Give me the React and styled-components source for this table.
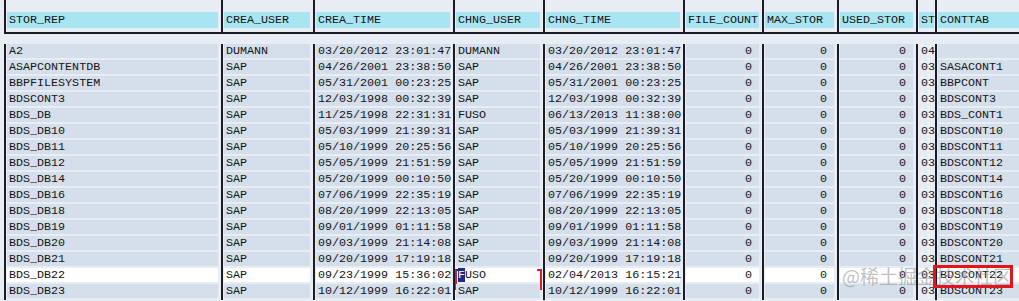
import React from 'react';
import styled, { createGlobalStyle, css } from 'styled-components';

const GlobalStyle = createGlobalStyle`
  html, body {
    margin: 0;
    padding: 0;
    background: #e8edf4;
    overflow: hidden;
  }
`;

const COLUMNS = [
  { key: 'rep', title: 'STOR_REP', width: 217 },
  { key: 'creaUser', title: 'CREA_USER', width: 92 },
  { key: 'creaTime', title: 'CREA_TIME', width: 140 },
  { key: 'chngUser', title: 'CHNG_USER', width: 90 },
  { key: 'chngTime', title: 'CHNG_TIME', width: 140 },
  { key: 'files', title: 'FILE_COUNT', width: 79, numeric: true },
  { key: 'max', title: 'MAX_STOR', width: 75, numeric: true },
  { key: 'used', title: 'USED_STOR', width: 79, numeric: true },
  { key: 'st', title: 'ST', width: 19, plain: true },
  { key: 'conttab', title: 'CONTTAB', width: 100 },
];

const row = (rep, creaUser, creaTime, chngUser, chngTime, st, conttab, extra = {}) => ({
  rep, creaUser, creaTime, chngUser, chngTime,
  files: '0', max: '0', used: '0', st, conttab, ...extra,
});

const ROWS = [
  row('A2', 'DUMANN', '03/20/2012 23:01:47', 'DUMANN', '03/20/2012 23:01:47', '04', ''),
  row('ASAPCONTENTDB', 'SAP', '04/26/2001 23:38:50', 'SAP', '04/26/2001 23:38:50', '03', 'SASACONT1'),
  row('BBPFILESYSTEM', 'SAP', '05/31/2001 00:23:25', 'SAP', '05/31/2001 00:23:25', '03', 'BBPCONT'),
  row('BDSCONT3', 'SAP', '12/03/1998 00:32:39', 'SAP', '12/03/1998 00:32:39', '03', 'BDSCONT3'),
  row('BDS_DB', 'SAP', '11/25/1998 22:31:31', 'FUSO', '06/13/2013 11:38:00', '03', 'BDS_CONT1'),
  row('BDS_DB10', 'SAP', '05/03/1999 21:39:31', 'SAP', '05/03/1999 21:39:31', '03', 'BDSCONT10'),
  row('BDS_DB11', 'SAP', '05/10/1999 20:25:56', 'SAP', '05/10/1999 20:25:56', '03', 'BDSCONT11'),
  row('BDS_DB12', 'SAP', '05/05/1999 21:51:59', 'SAP', '05/05/1999 21:51:59', '03', 'BDSCONT12'),
  row('BDS_DB14', 'SAP', '05/20/1999 00:10:50', 'SAP', '05/20/1999 00:10:50', '03', 'BDSCONT14'),
  row('BDS_DB16', 'SAP', '07/06/1999 22:35:19', 'SAP', '07/06/1999 22:35:19', '03', 'BDSCONT16'),
  row('BDS_DB18', 'SAP', '08/20/1999 22:13:05', 'SAP', '08/20/1999 22:13:05', '03', 'BDSCONT18'),
  row('BDS_DB19', 'SAP', '09/01/1999 01:11:58', 'SAP', '09/01/1999 01:11:58', '03', 'BDSCONT19'),
  row('BDS_DB20', 'SAP', '09/03/1999 21:14:08', 'SAP', '09/03/1999 21:14:08', '03', 'BDSCONT20'),
  row('BDS_DB21', 'SAP', '09/20/1999 17:19:18', 'SAP', '09/20/1999 17:19:18', '03', 'BDSCONT21'),
  row('BDS_DB22', 'SAP', '09/23/1999 15:36:02', 'FUSO', '02/04/2013 16:15:21', '03', 'BDSCONT22', { selected: true }),
  row('BDS_DB23', 'SAP', '10/12/1999 16:22:01', 'SAP', '10/12/1999 16:22:01', '03', 'BDSCONT23'),
];

const template = COLUMNS.map(c => `${c.width}px`).join(' ');

const Screen = styled.div`
  position: relative;
  width: 1019px;
  height: 301px;
  padding-left: 4px;
  box-sizing: border-box;
  font-family: "Liberation Mono", "DejaVu Sans Mono", monospace;
  font-size: 11.7px;
  color: #141414;
  overflow: hidden;
`;

const Row = styled.div`
  display: grid;
  grid-template-columns: ${template};
`;

const HeaderRow = styled(Row)`
  border-bottom: 2px solid #1c1c28;
  margin-bottom: 10px;
`;

const Cell = styled.div`
  position: relative;
  border-left: 2px solid #1c1c28;
  padding: ${p => (p.$tight ? '0 1px 0 1px' : '0 3px 0 1px')};
  min-width: 0;
`;

const HeaderCell = styled(Cell)`
  padding-top: 12px;
  padding-bottom: 4px;
`;

const HeaderBand = styled.div`
  height: 16px;
  line-height: 16px;
  padding-left: 2px;
  background: #a8e4f2;
  white-space: nowrap;
`;

const Band = styled.div`
  height: 14px;
  line-height: 14px;
  margin-bottom: 2px;
  padding: 0 1px 0 2px;
  white-space: nowrap;
  background: ${p => (p.$selected ? '#ffffff' : p.$plain ? 'transparent' : '#d5dfeb')};
  ${p => p.$numeric && css`
    text-align: right;
    padding-right: 7px;
  `}
`;

const EditCell = styled(Cell)`
  &::before, &::after {
    content: '';
    position: absolute;
    top: 1px;
    width: 3px;
    height: 17px;
    border: 2px solid #d4202c;
  }
  &::before {
    left: 0;
    border-right: none;
    border-top-color: #1c2c84;
  }
  &::after {
    right: 1px;
    border-left: none;
  }
`;

const Cursor = styled.span`
  background: #1c2c84;
  color: #ffffff;
`;

const Highlight = styled.div`
  position: absolute;
  left: 933px;
  top: 265px;
  width: 74px;
  height: 17px;
  border: 3px solid #e3141c;
`;

const Watermark = styled.div`
  position: absolute;
  left: 842px;
  top: 264px;
  font-family: "Noto Sans CJK SC", "Noto Sans", sans-serif;
  font-size: 19px;
  line-height: 24px;
  white-space: nowrap;
  color: rgba(140, 140, 140, 0.55);
  pointer-events: none;
`;

function DataRow({ data }) {
  return (
    <Row>
      {COLUMNS.map((c, i) => {
        const value = data[c.key];
        if (data.selected && c.key === 'chngUser') {
          return (
            <EditCell key={c.key}>
              <Band $selected>
                <Cursor>{value[0]}</Cursor>{value.slice(1)}
              </Band>
            </EditCell>
          );
        }
        return (
          <Cell key={c.key} $tight={c.plain}>
            <Band $selected={data.selected} $numeric={c.numeric} $plain={c.plain}>
              {value}
            </Band>
          </Cell>
        );
      })}
    </Row>
  );
}

export default function App() {
  return (
    <>
      <GlobalStyle />
      <Screen>
        <HeaderRow>
          {COLUMNS.map(c => (
            <HeaderCell key={c.key} $tight={c.plain}>
              <HeaderBand>{c.title}</HeaderBand>
            </HeaderCell>
          ))}
        </HeaderRow>
        {ROWS.map(r => <DataRow key={r.rep} data={r} />)}
        <Watermark>@稀土掘金技术社区</Watermark>
        <Highlight />
      </Screen>
    </>
  );
}
